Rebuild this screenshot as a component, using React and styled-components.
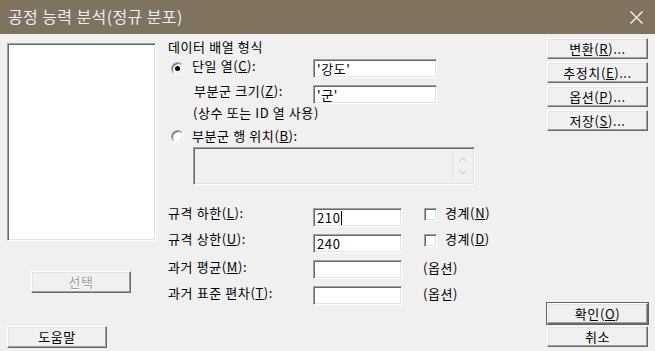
import React from "react";
import styled, { createGlobalStyle, css } from "styled-components";

const Global = createGlobalStyle`
  html, body { margin: 0; padding: 0; background: #f0f0f0; }
  body { font-family: "Noto Sans CJK KR", "Noto Sans", sans-serif; }
  * { box-sizing: border-box; }
`;

const Window = styled.div`
  width: 655px;
  height: 351px;
  background: #f0f0f0;
  color: #000;
  overflow: hidden;
  display: flex;
  flex-direction: column;
`;

const TitleBar = styled.div`
  height: 34px;
  flex: none;
  background: #7f7360;
  display: flex;
  align-items: center;
  padding: 0 12px 0 8px;
  justify-content: space-between;
`;

const Title = styled.div`
  color: #eceef6;
  font-size: 16px;
  letter-spacing: 0.4px;
  line-height: 20px;
  margin-top: -2px;
`;

const Body = styled.div`
  flex: 1;
  display: flex;
  align-items: flex-start;
  font-size: 13px;
  letter-spacing: 0.6px;
`;

const sunken = css`
  border: 1px solid;
  border-color: #a0a0a0 #fff #fff #a0a0a0;
  box-shadow: inset 1px 1px 0 #696969, inset -1px -1px 0 #e3e3e3;
`;

const LeftCol = styled.div`
  width: 149px;
  margin-left: 7px;
  padding-top: 9px;
  display: flex;
  flex-direction: column;
  align-items: flex-start;
`;

const ListBox = styled.div`
  ${sunken};
  width: 149px;
  height: 198px;
  background: #fff;
`;

const Button = styled.div`
  width: ${(p) => p.$w || 101}px;
  height: ${(p) => p.$h || 21}px;
  margin-top: ${(p) => p.$mt || 0}px;
  margin-left: ${(p) => p.$ml || 0}px;
  background: #f0f0f0;
  border: 1px solid;
  border-color: #fff #696969 #696969 #fff;
  box-shadow: inset -1px -1px 0 #a0a0a0, inset 1px 1px 0 #e3e3e3;
  display: flex;
  align-items: center;
  justify-content: center;
  font-size: 13px;
  line-height: 16px;
  white-space: nowrap;
  color: ${(p) => (p.$disabled ? "#a0a0a0" : "#000")};
  text-shadow: ${(p) => (p.$disabled ? "1px 1px 0 #fff" : "none")};
  ${(p) =>
    p.$default &&
    css`
      outline: 1px solid #646464;
      outline-offset: 0;
    `}
`;

const MiddleCol = styled.div`
  width: 345px;
  margin-left: 12px;
  padding-top: 5px;
  display: flex;
  flex-direction: column;
`;

const GroupTitle = styled.div`
  height: 16px;
  line-height: 16px;
`;

const FieldRow = styled.div`
  display: grid;
  grid-template-columns: 145px 124px;
  height: 19px;
  margin-top: ${(p) => p.$mt || 0}px;
`;

const Label = styled.div`
  display: flex;
  align-items: flex-start;
  line-height: 14px;
  margin-top: ${(p) => (p.$dy != null ? p.$dy : 0)}px;
  padding-left: ${(p) => p.$indent || 0}px;
  white-space: nowrap;
`;

const Radio = styled.span`
  ${sunken};
  flex: none;
  width: 13px;
  height: 13px;
  border-radius: 50%;
  background: #fff;
  margin-left: 3px;
  margin-right: 8px;
  margin-top: ${(p) => p.$dy || 0}px;
  display: flex;
  align-items: center;
  justify-content: center;
  &::after {
    content: "";
    width: 5px;
    height: 5px;
    border-radius: 50%;
    background: ${(p) => (p.$checked ? "#000" : "transparent")};
  }
`;

const TextBox = styled.div`
  ${sunken};
  height: 19px;
  background: #fff;
  padding: 0 3px;
  line-height: 16px;
  font-size: 13px;
  white-space: nowrap;
  display: flex;
  align-items: center;
`;

const Caret = styled.span`
  display: inline-block;
  width: 1px;
  height: 14px;
  background: #000;
  margin-left: 1px;
`;

const Note = styled.div`
  height: 16px;
  line-height: 16px;
  margin-top: 1px;
  padding-left: 25px;
`;

const RadioRow = styled.div`
  display: flex;
  align-items: flex-start;
  height: 16px;
  line-height: 14px;
  margin-top: 8px;
  white-space: nowrap;
`;

const SpinBox = styled.div`
  ${sunken};
  width: 282px;
  height: 38px;
  margin-top: 2px;
  margin-left: 25px;
  background: #f0f0f0;
  display: flex;
  justify-content: flex-end;
  padding: 2px;
`;

const SpinScroll = styled.div`
  width: 20px;
  border-left: 1px solid #e3e3e3;
  display: flex;
  flex-direction: column;
  align-items: center;
  justify-content: space-around;
  padding: 3px 0;
`;

const LimitGrid = styled.div`
  display: grid;
  grid-template-columns: 145px 89px max-content;
  grid-auto-rows: 19px;
  row-gap: 7px;
  margin-top: 23px;
`;

const Extra = styled.div`
  display: flex;
  align-items: flex-start;
  padding-left: ${(p) => (p.$note ? 21 : 22)}px;
  line-height: 14px;
  white-space: nowrap;
`;

const CheckBox = styled.span`
  ${sunken};
  width: 13px;
  height: 13px;
  background: #fff;
  margin-right: 8px;
  flex: none;
`;

const ExtraText = styled.span`
  margin-top: ${(p) => (p.$note ? 1 : -2)}px;
`;

const RightCol = styled.div`
  width: 101px;
  margin-left: auto;
  margin-right: 7px;
  padding-top: 4px;
  display: flex;
  flex-direction: column;
  gap: 3px;
`;

const Chevron = ({ up }) => (
  <svg width="8" height="5" viewBox="0 0 8 5">
    <path
      d={up ? "M0.5 4.5 L4 1 L7.5 4.5" : "M0.5 0.5 L4 4 L7.5 0.5"}
      fill="none"
      stroke="#c3c3c3"
      strokeWidth="1"
    />
  </svg>
);

const CloseIcon = () => (
  <svg width="13" height="13" viewBox="0 0 13 13">
    <path d="M0.5 0.5 L12.5 12.5 M12.5 0.5 L0.5 12.5" stroke="#f4f4f4" strokeWidth="1.4" />
  </svg>
);

export default function App() {
  return (
    <>
      <Global />
      <Window>
        <TitleBar>
          <Title>공정 능력 분석(정규 분포)</Title>
          <CloseIcon />
        </TitleBar>
        <Body>
          <LeftCol>
            <ListBox />
            <Button $w={100} $h={22} $mt={30} $ml={24} $disabled>
              선택
            </Button>
            <Button $w={100} $h={22} $mt={33}>
              도움말
            </Button>
          </LeftCol>

          <MiddleCol>
            <GroupTitle>데이터 배열 형식</GroupTitle>
            <FieldRow $mt={4}>
              <Label>
                <Radio $checked $dy={3} />
                <span>
                  단일 열(<u>C</u>):
                </span>
              </Label>
              <TextBox>'강도'</TextBox>
            </FieldRow>
            <FieldRow $mt={7}>
              <Label $indent={26} $dy={-1}>
                부분군 크기(<u>Z</u>):
              </Label>
              <TextBox>'군'</TextBox>
            </FieldRow>
            <Note>(상수 또는 ID 열 사용)</Note>
            <RadioRow>
              <Radio $dy={1} />
              <span>
                부분군 행 위치(<u>B</u>):
              </span>
            </RadioRow>
            <SpinBox>
              <SpinScroll>
                <Chevron up />
                <Chevron />
              </SpinScroll>
            </SpinBox>

            <LimitGrid>
              <Label $dy={-2}>
                규격 하한(<u>L</u>):
              </Label>
              <TextBox>
                210
                <Caret />
              </TextBox>
              <Extra>
                <CheckBox />
                <ExtraText>
                  경계(<u>N</u>)
                </ExtraText>
              </Extra>

              <Label $dy={-2}>
                규격 상한(<u>U</u>):
              </Label>
              <TextBox>240</TextBox>
              <Extra>
                <CheckBox />
                <ExtraText>
                  경계(<u>D</u>)
                </ExtraText>
              </Extra>

              <Label>
                과거 평균(<u>M</u>):
              </Label>
              <TextBox />
              <Extra $note>
                <ExtraText $note>(옵션)</ExtraText>
              </Extra>

              <Label>
                과거 표준 편차(<u>T</u>):
              </Label>
              <TextBox />
              <Extra $note>
                <ExtraText $note>(옵션)</ExtraText>
              </Extra>
            </LimitGrid>
          </MiddleCol>

          <RightCol>
            <Button>
              변환(<u>R</u>)...
            </Button>
            <Button>
              추정치(<u>E</u>)...
            </Button>
            <Button>
              옵션(<u>P</u>)...
            </Button>
            <Button>
              저장(<u>S</u>)...
            </Button>
            <Button $default $mt={169}>
              확인(<u>O</u>)
            </Button>
            <Button $mt={-1}>취소</Button>
          </RightCol>
        </Body>
      </Window>
    </>
  );
}
